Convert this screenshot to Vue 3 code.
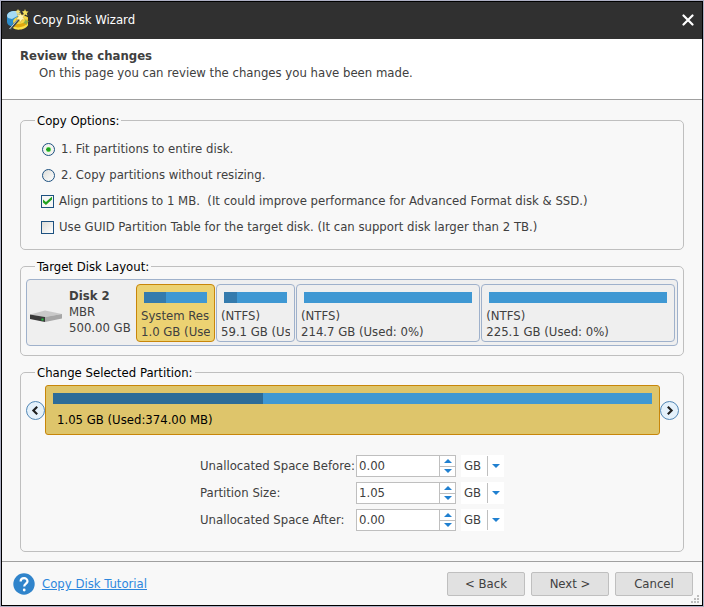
<script setup>
import { reactive, ref } from 'vue'

const sizing = ref('fit')
const align = ref(true)
const guid = ref(false)

const partitions = [
  { name: 'System Reserved', size: '1.0 GB (Used: 35%)', used: 35, grow: 0, selected: true },
  { name: '(NTFS)', size: '59.1 GB (Used: 20%)', used: 20, grow: 0 },
  { name: '(NTFS)', size: '214.7 GB (Used: 0%)', used: 0, grow: 184 },
  { name: '(NTFS)', size: '225.1 GB (Used: 0%)', used: 0, grow: 194 },
]

const fields = reactive([
  { id: 'before', label: 'Unallocated Space Before:', value: '0.00', unit: 'GB' },
  { id: 'size', label: 'Partition Size:', value: '1.05', unit: 'GB' },
  { id: 'after', label: 'Unallocated Space After:', value: '0.00', unit: 'GB' },
])

function step(field, delta) {
  field.value = Math.max(0, Number(field.value) + delta).toFixed(2)
}
</script>

<template>
  <div class="desktop">
    <main class="window">
      <header class="titlebar">
        <svg class="logo" viewBox="0 0 22 22" aria-hidden="true">
          <path d="M0 7C0 3 5 1.500 9 2l5 2v8l-8 6C2 17 0 15 0 13z" fill="#2b8ccb" />
          <path d="M0 7C0 3.500 5 1.500 9.500 2.200L14 5 5 10C2 9.500 0 9 0 7z" fill="#a5daf3" />
          <path d="M7 11l14-3v7c-1 5-12 7-15 3z" fill="#e0a70e" />
          <path d="M6 12C8 7 19 5 21 9c0 4-9 7-14 6z" fill="#f3d748" />
          <path d="M6 17c4 3 12 1 15-3v2c-2 5-12 6-15 3z" fill="#f9e04a" />
          <path d="M3 20.500L13 9" stroke="#3c464c" stroke-width="2.400" />
          <path d="M2.500 20L13 8" stroke="#c9d4da" stroke-width="1" />
          <path d="M13 3.500l1.600 2.600 3.400-.6-1.800 2.900 2 2.600-3.200-.3-1.600 2.800-1.200-3-3.200-.4 2.300-2.200-.9-3 2.500.9z" fill="#fdf3b4" stroke="#d3a71c" stroke-width=".5" />
          <path d="M18 0l1 2.200 2.500.2-1.700 1.800.7 2.500-2.200-1.200-2 1.200.3-2.500L15 2.500l2.200-.4z" fill="#f3df5c" />
          <path d="M11 0l.8 1.600 1.900.3-1.400 1.300.4 1.800-1.700-.9-1.600.9.3-1.800L8.400 1.900l1.800-.3z" fill="#f1e07a" />
          <path d="M19 10l.8 1.700 2.200.6-1.700 1.300-.3 2.400-1.600-1.600-2.200.2 1.200-1.900z" fill="#8fae45" />
        </svg>
        <h1>Copy Disk Wizard</h1>
        <button class="close" type="button" aria-label="Close">
          <svg viewBox="0 0 12 12"><path d="M1.500 1.500l9 9M10.500 1.500l-9 9" stroke="#fff" stroke-width="2.200" stroke-linecap="round" /></svg>
        </button>
      </header>

      <section class="intro">
        <h2>Review the changes</h2>
        <p>On this page you can review the changes you have been made.</p>
      </section>

      <form class="content" @submit.prevent>
        <fieldset>
          <legend>Copy Options:</legend>
          <div class="options">
            <label class="radio"><input v-model="sizing" type="radio" name="sizing" value="fit" />1. Fit partitions to entire disk.</label>
            <label class="radio"><input v-model="sizing" type="radio" name="sizing" value="keep" />2. Copy partitions without resizing.</label>
            <label class="check"><input v-model="align" type="checkbox" />Align partitions to 1 MB.&nbsp; (It could improve performance for Advanced Format disk &amp; SSD.)</label>
            <label class="check"><input v-model="guid" type="checkbox" />Use GUID Partition Table for the target disk. (It can support disk larger than 2 TB.)</label>
          </div>
        </fieldset>

        <fieldset>
          <legend>Target Disk Layout:</legend>
          <div class="disk">
            <svg class="drive" viewBox="0 0 32 14" aria-hidden="true">
              <path d="M0 5.500L15 1.500 32 5 15 8z" fill="#c9c9c9" />
              <path d="M0 5.500L15 8v5L0 10z" fill="#3a3a3a" />
              <path d="M15 8L32 5v4.500L15 13z" fill="#a6a6a6" />
              <path d="M11.500 9.500h2v2h-2z" fill="#22c33c" />
            </svg>
            <div class="disk-info">
              <strong>Disk 2</strong>
              <span>MBR</span>
              <span>500.00 GB</span>
            </div>
            <div class="partitions">
              <div
                v-for="(p, i) in partitions"
                :key="i"
                class="partition"
                :class="{ selected: p.selected }"
                :style="p.grow ? { flexGrow: p.grow } : null"
              >
                <div class="usage"><i :style="{ width: p.used + '%' }"></i></div>
                <div class="clip">{{ p.name }}</div>
                <div class="clip">{{ p.size }}</div>
              </div>
            </div>
          </div>
        </fieldset>

        <fieldset>
          <legend>Change Selected Partition:</legend>
          <div class="resizer">
            <button class="arrow" type="button" aria-label="Previous">
              <svg viewBox="0 0 20 20"><path d="M12 5.500L7.500 10l4.500 4.500" /></svg>
            </button>
            <div class="current">
              <div class="usage"><i :style="{ width: '35%' }"></i></div>
              <div>1.05 GB (Used:374.00 MB)</div>
            </div>
            <button class="arrow" type="button" aria-label="Next">
              <svg viewBox="0 0 20 20"><path d="M8 5.500l4.500 4.500L8 14.500" /></svg>
            </button>
          </div>
          <div class="sizes">
            <div v-for="f in fields" :key="f.id" class="size-row">
              <label :for="f.id">{{ f.label }}</label>
              <div class="spinner">
                <input :id="f.id" v-model="f.value" type="text" />
                <div class="steps">
                  <button type="button" aria-label="Increase" @click="step(f, 0.01)">
                    <svg viewBox="0 0 8 4"><path d="M0 4l4-4 4 4z" /></svg>
                  </button>
                  <button type="button" aria-label="Decrease" @click="step(f, -0.01)">
                    <svg viewBox="0 0 8 4"><path d="M0 0h8L4 4z" /></svg>
                  </button>
                </div>
              </div>
              <div class="unit">
                <select v-model="f.unit" :aria-label="f.label">
                  <option>MB</option>
                  <option>GB</option>
                  <option>TB</option>
                </select>
                <span class="caret"><svg viewBox="0 0 8 4"><path d="M0 0h8L4 4z" /></svg></span>
              </div>
            </div>
          </div>
        </fieldset>
      </form>

      <footer>
        <svg class="help" viewBox="0 0 22 22" aria-hidden="true">
          <circle cx="11" cy="11" r="10.700" fill="#3084cb" />
          <path d="M7.600 8.600C7.600 4 14.600 4.200 14.500 8.400 14.400 10.600 11.200 10.800 11.200 13.600" fill="none" stroke="#fff" stroke-width="2.200" />
          <circle cx="11.200" cy="17" r="1.400" fill="#fff" />
        </svg>
        <a href="#tutorial">Copy Disk Tutorial</a>
        <div class="actions">
          <button type="button">&lt; Back</button>
          <button type="button">Next &gt;</button>
          <button type="button">Cancel</button>
        </div>
        <svg class="grip" viewBox="0 0 8 8" aria-hidden="true">
          <path d="M6 0h2v2H6zM3 3h2v2H3zM6 3h2v2H6zM0 6h2v2H0zM3 6h2v2H3zM6 6h2v2H6z" fill="#bdbdbd" />
        </svg>
      </footer>
    </main>
  </div>
</template>

<style>
body {
  background: #aeb0c4;
}
</style>

<style scoped>
* {
  box-sizing: border-box;
}

.desktop {
  display: flex;
  min-height: 100vh;
  padding: 1px;
  font: 13px/16px "DejaVu Sans Condensed", "DejaVu Sans", sans-serif;
  font-stretch: condensed;
  color: #404040;
}

.window {
  display: flex;
  flex: 1;
  flex-direction: column;
  min-width: 0;
  border: 1px solid #000;
  background: #f8f8f8;
}

button,
input,
select {
  margin: 0;
  padding: 0;
  border: 0;
  font: inherit;
  color: inherit;
}

svg {
  display: block;
}

.titlebar {
  display: flex;
  align-items: center;
  height: 37px;
  padding: 0 8px 2px 5px;
  background: #303030;
  color: #fff;
}

.logo {
  width: 22px;
  height: 22px;
}

h1 {
  flex: 1;
  margin: 0 0 0 4px;
  font: inherit;
}

.close {
  width: 12px;
  background: none;
}

.intro {
  height: 61px;
  padding: 9px 18px;
  border-bottom: 1px solid #a0a0a0;
  background: #fff;
}

h2 {
  margin: 0;
  font-size: 13px;
  line-height: 16px;
}

p {
  margin: 1px 0 0 19px;
}

.content {
  display: flex;
  flex: 1;
  flex-direction: column;
  gap: 8px;
  padding: 12px 18px 9px;
}

fieldset {
  min-width: 0;
  margin: 0;
  padding: 0;
  border: 1px solid #bfbfbf;
  border-radius: 5px;
}

legend {
  height: 17px;
  margin-left: 14px;
  padding: 0 2px;
  line-height: 17px;
  color: #000;
}

.options {
  padding: 7px 20px 9px;
}

.options label {
  display: flex;
  align-items: center;
  height: 26px;
}

.options input {
  flex: none;
  width: 13px;
  height: 13px;
  appearance: none;
  border: 1px solid #1d5180;
  background: linear-gradient(135deg, #dcdcd7, #fff);
}

.radio input {
  margin: 0 6px 0 1px;
  border-radius: 50%;
}

.radio input:checked {
  background: radial-gradient(circle, #21a121 0 2px, #55d551 2px, #f3f3ef 3px);
}

.check input {
  margin-right: 5px;
}

.check input:checked {
  display: grid;
  background: #f7f7f5;
}

.check input:checked::after {
  content: "";
  width: 9px;
  height: 9px;
  margin: 1px;
  background: #21a121;
  clip-path: polygon(0 33%, 33% 60%, 100% 0, 100% 33%, 33% 95%, 0 66%);
}

.disk {
  display: flex;
  align-items: center;
  margin: 4px 5px 9px;
  padding: 4px 2px 3px 3px;
  border: 1px solid #9fb1cb;
  border-radius: 4px;
  background: #efefef;
}

.drive {
  flex: none;
  width: 32px;
  height: 14px;
  margin-top: 6px;
}

.disk-info {
  display: flex;
  flex: none;
  flex-direction: column;
  width: 67px;
  padding-left: 7px;
  padding-bottom: 2px;
  white-space: nowrap;
}

strong {
  font-size: 13px;
}

.partitions {
  display: flex;
  flex: 1;
  gap: 1px;
  min-width: 0;
  margin-left: 7px;
}

.partition {
  flex: 0 1 79px;
  min-width: 0;
  padding: 7px 4px 1px;
  border: 1px solid #9fb1cb;
  border-radius: 4px;
}

.partition[style] {
  flex-basis: 0;
}

.partition.selected {
  border-color: #c8860a;
  background: #ecd272;
}

.usage {
  height: 11px;
  margin: 0 3px 5px;
  background: #3f98d3;
}

.usage i {
  display: block;
  height: 100%;
  background: #357bad;
}

.clip {
  overflow: hidden;
  white-space: nowrap;
}

.resizer {
  display: flex;
  align-items: center;
  margin: 4px 4px 0 5px;
}

.arrow {
  flex: none;
  width: 19px;
  height: 19px;
  border: 1px solid #5287b5;
  border-radius: 50%;
  background: #e4f1fb;
}

.arrow path {
  fill: none;
  stroke: #202020;
  stroke-width: 2.500;
}

.current {
  flex: 1;
  height: 50px;
  padding: 7px;
  border: 1px solid #c8860a;
  border-radius: 3px;
  background: #dec56b;
  color: #000;
}

.current .usage {
  margin: 0 0 8px;
}

.current .usage i {
  background: #2d6c98;
}

.current .usage + div {
  padding-left: 4px;
}

.sizes {
  display: grid;
  gap: 5px;
  justify-content: center;
  padding: 20px 0;
}

.size-row {
  display: grid;
  grid-template-columns: 151px 100px 43px;
  column-gap: 5px;
  align-items: center;
  white-space: nowrap;
}

.spinner {
  display: flex;
  height: 22px;
  border: 1px solid #bfbfbf;
  background: #fff;
}

.spinner input {
  flex: 1;
  min-width: 0;
  padding-left: 2px;
  background: none;
}

.steps {
  display: grid;
  width: 16px;
  border-left: 1px solid #bfbfbf;
}

.steps button {
  display: grid;
  place-items: center;
  background: none;
}

.steps button + button {
  border-top: 1px solid #bfbfbf;
}

.steps svg,
.caret svg {
  width: 8px;
  height: 4px;
  fill: #2080d0;
}

.unit {
  display: grid;
  height: 22px;
  background: #fff;
}

.unit > * {
  grid-area: 1 / 1;
}

.unit select {
  appearance: none;
  padding-left: 3px;
  background: none;
}

.caret {
  display: grid;
  place-items: center;
  justify-self: end;
  width: 17px;
  height: 20px;
  margin-top: 1px;
  border-left: 1px solid #bfbfbf;
  pointer-events: none;
}

footer {
  position: relative;
  display: flex;
  align-items: center;
  padding: 10px 9px 9px 11px;
  border-top: 1px solid #a0a0a0;
}

.help {
  width: 22px;
  height: 22px;
  margin-right: 7px;
}

a {
  color: #2d87dd;
}

.actions {
  display: flex;
  gap: 6px;
  margin-left: auto;
}

.actions button {
  width: 78px;
  height: 24px;
  border: 1px solid #bfbfbf;
  border-radius: 2px;
  background: #e1e1e1;
}

.grip {
  position: absolute;
  right: 3px;
  bottom: 2px;
  width: 8px;
  height: 8px;
}
</style>
